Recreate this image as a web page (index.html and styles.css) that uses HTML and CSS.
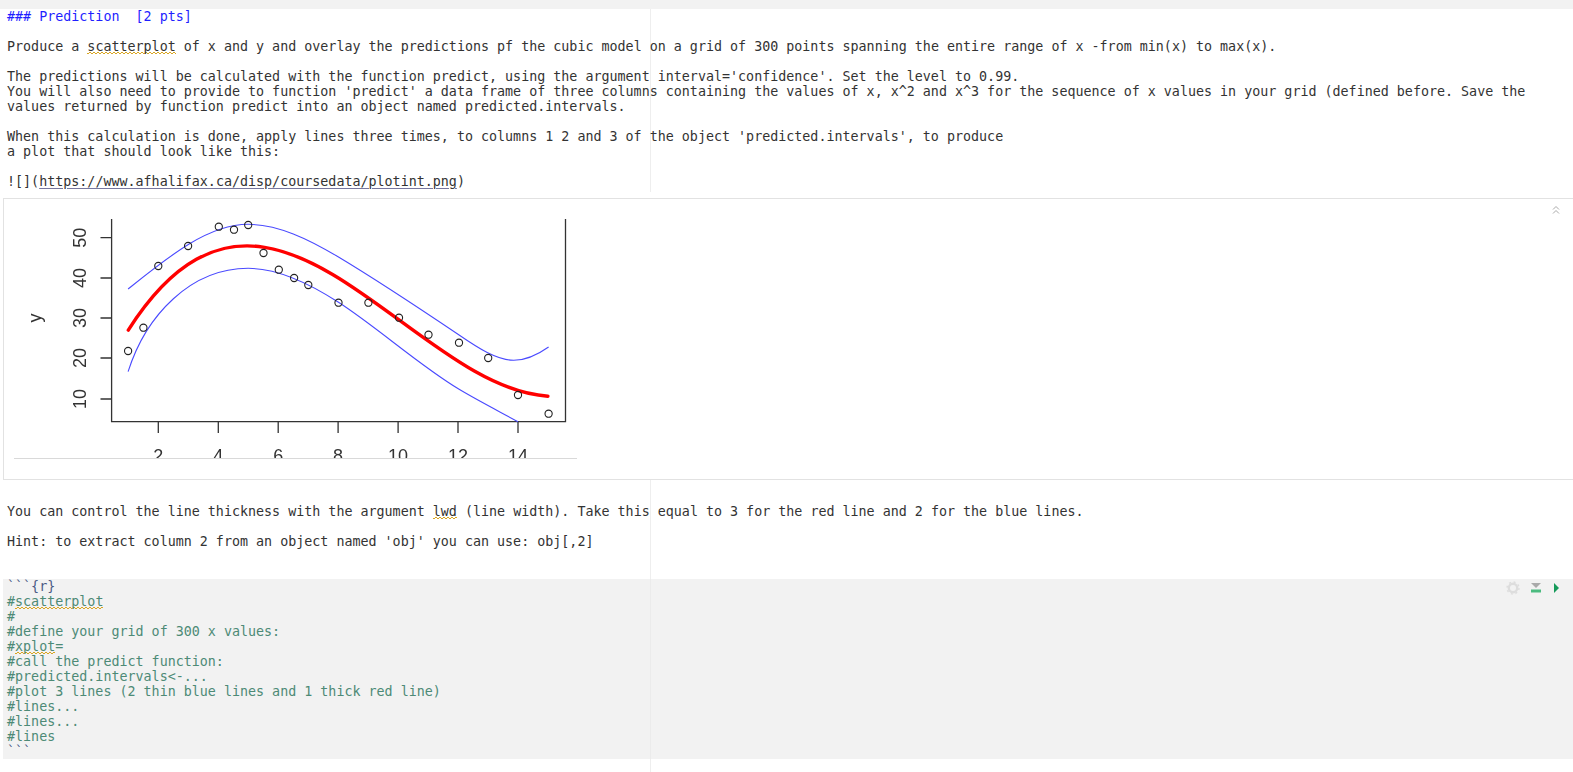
FILE: index.html
```html
<!DOCTYPE html>
<html lang="en">
<head>
<meta charset="utf-8">
<title>Prediction</title>
<link rel="stylesheet" href="styles.css">
</head>
<body>
<div class="top-strip"></div>
<section class="prose prose-first">
<div class="line head">### Prediction  [2 pts]</div>
<div class="line"></div>
<div class="line">Produce a <span class="spell">scatterplot</span> of x and y and overlay the predictions pf the cubic model on a grid of 300 points spanning the entire range of x -from min(x) to max(x).</div>
<div class="line"></div>
<div class="line">The predictions will be calculated with the function predict, using the argument interval='confidence'. Set the level to 0.99.</div>
<div class="line">You will also need to provide to function 'predict' a data frame of three columns containing the values of x, x^2 and x^3 for the sequence of x values in your grid (defined before. Save the</div>
<div class="line">values returned by function predict into an object named predicted.intervals.</div>
<div class="line"></div>
<div class="line">When this calculation is done, apply lines three times, to columns 1 2 and 3 of the object 'predicted.intervals', to produce</div>
<div class="line">a plot that should look like this:</div>
<div class="line"></div>
<div class="line">![](<span class="link">https://www.afhalifax.ca/disp/coursedata/plotint.png</span>)</div>
</section>

<section class="output">
<svg class="fold" viewBox="0 0 8 10" width="8" height="10" aria-hidden="true">
<path d="M1 4.5 4 1.5 7 4.5M1 8.5 4 5.5 7 8.5" fill="none" stroke="#aaa" stroke-width="1"/>
</svg>
<div class="plot-wrap">
<svg class="plot" viewBox="13 219 563 239" width="563" height="239" role="img">
<g class="axes">
<path d="M110.6 219V421.7H564.5V219"/>
<path d="M99.5 237.7H110.6M99.5 278H110.6M99.5 318H110.6M99.5 358H110.6M99.5 399H110.6"/>
<path d="M157.3 421.7V433M217.3 421.7V433M277.2 421.7V433M337.1 421.7V433M397.1 421.7V433M457 421.7V433M517 421.7V433"/>
</g>
<g class="labels">
<text transform="rotate(-90 85 237.7)" x="85" y="237.7">50</text>
<text transform="rotate(-90 85 278)" x="85" y="278">40</text>
<text transform="rotate(-90 85 318)" x="85" y="318">30</text>
<text transform="rotate(-90 85 358)" x="85" y="358">20</text>
<text transform="rotate(-90 85 399)" x="85" y="399">10</text>
<text transform="rotate(-90 40 318)" x="40" y="318">y</text>
<text x="157.3" y="461.5">2</text>
<text x="217.3" y="461.5">4</text>
<text x="277.2" y="461.5">6</text>
<text x="337.1" y="461.5">8</text>
<text x="397.1" y="461.5">10</text>
<text x="457" y="461.5">12</text>
<text x="517" y="461.5">14</text>
</g>
<path class="red" d="M127.3 330.1C267.2 111 407.1 387.6 546.9 396.2"/>
<path class="blue" d="M127.1 289C167 257 207 224.3 247.2 224.3C277 224.3 307.5 239 337.5 257C377.5 281 418 308 458.1 335C477 348 496 360.3 512.8 360.3C524 360.3 537 354.5 547.6 347"/>
<path class="blue" d="M127.1 371.7C145 315 190 268.3 247.2 268.3C277 268.3 310 284.4 337.5 302.3C377.5 328.3 418 365.2 458.1 389.3C477.7 401 497.4 411 517 421.7"/>
<g class="points">
<circle cx="127.1" cy="351" r="3.6"/><circle cx="142.4" cy="327.7" r="3.6"/><circle cx="157.3" cy="266" r="3.6"/><circle cx="187.1" cy="246" r="3.6"/><circle cx="217.8" cy="226.7" r="3.6"/><circle cx="233" cy="229.7" r="3.6"/><circle cx="247.2" cy="225" r="3.6"/><circle cx="262.5" cy="253" r="3.6"/><circle cx="277.8" cy="269.7" r="3.6"/><circle cx="293.1" cy="278" r="3.6"/><circle cx="307.3" cy="285" r="3.6"/><circle cx="337.5" cy="302.7" r="3.6"/><circle cx="367.4" cy="302.7" r="3.6"/><circle cx="398" cy="317.7" r="3.6"/><circle cx="427.5" cy="334.7" r="3.6"/><circle cx="458" cy="342.7" r="3.6"/><circle cx="487.2" cy="358" r="3.6"/><circle cx="517" cy="395" r="3.6"/><circle cx="547.6" cy="413.7" r="3.6"/>
</g>
</svg>
</div>
</section>

<section class="prose prose-second">
<div class="line"></div>
<div class="line">You can control the line thickness with the argument <span class="spell">lwd</span> (line width). Take this equal to 3 for the red line and 2 for the blue lines.</div>
<div class="line"></div>
<div class="line">Hint: to extract column 2 from an object named 'obj' you can use: obj[,2]</div>
<div class="line"></div>
<div class="line"></div>
</section>

<section class="chunk">
<div class="chunk-tools">
<svg viewBox="0 0 14 14" width="14" height="14" aria-hidden="true"><circle cx="7" cy="7" r="4.2" fill="none" stroke="#ddd" stroke-width="2.4"/><circle cx="7" cy="7" r="6" fill="none" stroke="#ddd" stroke-width="1.4" stroke-dasharray="2 2.7"/></svg>
<svg viewBox="0 0 10 10" width="10" height="10" aria-hidden="true"><path d="M0 0H10L5 5Z" fill="#aaa"/><rect y="6.5" width="10" height="3" fill="#4cbb80"/></svg>
<svg class="run" viewBox="0 0 5 10" width="5" height="10" aria-hidden="true"><path d="M0 0 5 5 0 10Z" fill="#169a5a"/></svg>
</div>
<div class="line fence">```{r}</div>
<div class="line">#<span class="spell">scatterplot</span></div>
<div class="line">#</div>
<div class="line">#define your grid of 300 x values:</div>
<div class="line">#<span class="spell">xplot</span>=</div>
<div class="line">#call the predict function:</div>
<div class="line">#predicted.intervals&lt;-...</div>
<div class="line">#plot 3 lines (2 thin blue lines and 1 thick red line)</div>
<div class="line">#lines...</div>
<div class="line">#lines...</div>
<div class="line">#lines</div>
<div class="line fence">```</div>
</section>
<div class="tail"></div>
</body>
</html>
```
FILE: styles.css
```css
html, body {
  margin: 0;
  height: 772px;
  overflow: hidden;
  background: #fff;
}
body {
  font-family: "DejaVu Sans Mono", "Liberation Mono", monospace;
  font-size: 13.35px;
  line-height: 15px;
  color: #333;
  --margin-line: linear-gradient(#eeeeee, #eeeeee) 650px 0 / 1px 100% no-repeat;
}
.top-strip {
  height: 9px;
  background: #f2f2f2;
}
.line {
  height: 15px;
  white-space: pre;
  padding-left: 7px;
}
.prose {
  background: var(--margin-line);
}
.prose-first {
  height: 183px;
  margin-bottom: 6px;
}
.prose-second {
  padding-top: 9px;
}
.head {
  color: #1f1fff;
}
.spell {
  background-image:
    repeating-linear-gradient(90deg, #d9a520 0 2px, transparent 2px 4px),
    repeating-linear-gradient(90deg, #d9a520 0 2px, transparent 2px 4px);
  background-size: 100% 1px;
  background-position: 0 100%, 2px calc(100% - 1px);
  background-repeat: no-repeat;
}
.link {
  text-decoration: underline #77779f 1px;
  text-underline-offset: 2px;
}
.output {
  position: relative;
  box-sizing: border-box;
  height: 282px;
  margin-left: 3px;
  padding: 20px 0 0 10px;
  border-top: 1px solid #e2e2e2;
  border-bottom: 1px solid #e2e2e2;
  border-left: 1px solid #e2e2e2;
}
.fold {
  position: absolute;
  top: 6px;
  right: 13px;
}
.plot-wrap {
  width: 563px;
  border-bottom: 1px solid #d9d9d9;
}
.plot {
  display: block;
  overflow: hidden;
  filter: blur(0.3px);
}
.axes path {
  fill: none;
  stroke: #333;
  stroke-width: 1.3;
}
.labels text {
  font-family: "Liberation Sans", Arial, sans-serif;
  font-size: 18px;
  fill: #333;
  text-anchor: middle;
}
.red {
  fill: none;
  stroke: #f00;
  stroke-width: 3.4;
  stroke-linecap: round;
}
.blue {
  fill: none;
  stroke: #4a4aff;
  stroke-width: 1.1;
  stroke-linejoin: round;
}
.points circle {
  fill: none;
  stroke: #222;
  stroke-width: 1.1;
}
.chunk {
  position: relative;
  margin-left: 3px;
  background: linear-gradient(#ebebeb, #ebebeb) 647px 0 / 1px 100% no-repeat, #f2f2f2;
  color: #4d8a76;
}
.chunk .line {
  padding-left: 4px;
}
.chunk .fence {
  color: #4a5a85;
}
.chunk-tools {
  position: absolute;
  top: 2px;
  right: 14px;
  display: flex;
  align-items: center;
  gap: 11px;
}
.run {
  margin-left: 2px;
}
.tail {
  height: 13px;
  background: var(--margin-line);
}
```
